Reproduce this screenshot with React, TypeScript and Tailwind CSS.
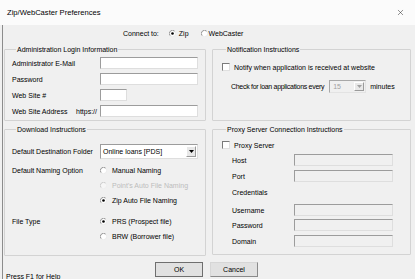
import { X } from 'lucide-react';

// ── Small classic controls ──────────────────────────────────
function Radio({ checked = false }: { checked?: boolean }) {
  return (
    <svg width="7" height="7" viewBox="0 0 14 14" className="shrink-0">
      <circle cx="7" cy="7" r="6.3" fill="#ffffff" />
      <path d="M11.5 2.5 A6.3 6.3 0 0 0 2.5 11.5" stroke="#7a7a7a" strokeWidth="1.6" fill="none" />
      <path d="M2.5 11.5 A6.3 6.3 0 0 0 11.5 2.5" stroke="#e6e6e6" strokeWidth="1.6" fill="none" />
      {checked && <circle cx="7" cy="7" r="2.6" fill="#000000" />}
    </svg>
  );
}

function Check() {
  return <div className="w-[8px] h-[8px] shrink-0 bg-white border border-t-[#7a7a7a] border-l-[#7a7a7a] border-r-[#e0e0e0] border-b-[#e0e0e0]" />;
}

function Field({ w = 'w-[98px]', disabled = false }: { w?: string; disabled?: boolean }) {
  return (
    <input
      readOnly
      className={`${w} h-[12px] ${disabled ? 'bg-[#f0f0f0]' : 'bg-white'} border border-t-[#9c9c9c] border-l-[#9c9c9c] border-r-[#dedede] border-b-[#dedede] outline-none`}
    />
  );
}

function Arrow({ color = '#000' }: { color?: string }) {
  return (
    <div className="w-[10px] self-stretch m-[1px] bg-[#e8e8e8] border border-t-white border-l-white border-r-[#9a9a9a] border-b-[#9a9a9a] flex items-center justify-center">
      <svg width="5" height="3" viewBox="0 0 5 3">
        <path d="M0 0 H5 L2.5 3 Z" fill={color} />
      </svg>
    </div>
  );
}

function Group({ title, className, children }: { title: string; className: string; children: React.ReactNode }) {
  return (
    <fieldset className={`border border-[#d3d3d3] rounded-[1px] ${className}`}>
      <legend className="ml-[4px] px-[1px] leading-[9px]">{title}</legend>
      {children}
    </fieldset>
  );
}

// ── Dialog ──────────────────────────────────────────────────
export default function App() {
  return (
    <div className="w-[415px] h-[279px] overflow-hidden bg-[#f0f0f0] text-[7px] leading-[9px] text-black font-['Liberation_Sans',Arial,sans-serif] flex flex-col">
      {/* Title bar */}
      <div className="h-[25px] shrink-0 bg-[#fbfbfb] flex items-center justify-between pl-[7px] pr-[10px]">
        <span className="text-[7.6px]">Zip/WebCaster Preferences</span>
        <X size={9} strokeWidth={1.3} color="#222" />
      </div>

      <div className="flex-1 flex flex-col ml-[2px] pl-[1px] border-l border-[#8c8c8c]">
        {/* Connect to */}
        <div className="h-[16px] shrink-0 flex items-center pl-[119px]">
          <span>Connect to:</span>
          <span className="ml-[10px]"><Radio checked /></span>
          <span className="ml-[3px]">Zip</span>
          <span className="ml-[12px]"><Radio /></span>
          <span className="ml-[1px]">WebCaster</span>
        </div>

        {/* Row 1 */}
        <div className="flex gap-[6px] mt-[4px]">
          <Group title="Administration Login Information" className="w-[202px] h-[76px] pl-[7px] pt-[3px]">
            <div className="flex flex-col gap-[4px]">
              <div className="flex items-center h-[12px]">
                <span className="w-[88px]">Administrator E-Mail</span>
                <Field />
              </div>
              <div className="flex items-center h-[12px]">
                <span className="w-[88px]">Password</span>
                <Field />
              </div>
              <div className="flex items-center h-[12px]">
                <span className="w-[88px]">Web Site #</span>
                <Field w="w-[27px]" />
              </div>
              <div className="flex items-center h-[12px]">
                <span className="w-[88px] flex justify-between pr-[3px]">
                  <span>Web Site Address</span>
                  <span>https://</span>
                </span>
                <Field />
              </div>
            </div>
          </Group>

          <Group title="Notification Instructions" className="w-[199px] h-[76px] pl-[9px] pt-[8px]">
            <div className="flex items-center h-[10px] gap-[4px]">
              <Check />
              <span>Notify when application is received at website</span>
            </div>
            <div className="flex items-center h-[13px] mt-[8px] ml-[9px]">
              <span className="tracking-[-0.3px]">Check for loan applications every</span>
              <div className="ml-[5px] w-[37px] h-[13px] flex items-stretch bg-[#f0f0f0] border border-t-[#a8a8a8] border-l-[#a8a8a8] border-r-[#e3e3e3] border-b-[#e3e3e3]">
                <span className="flex-1 pl-[3px] flex items-center text-[#a0a0a0]">15</span>
                <Arrow color="#a0a0a0" />
              </div>
              <span className="ml-[4px]">minutes</span>
            </div>
          </Group>
        </div>

        {/* Row 2 */}
        <div className="flex gap-[6px] mt-[4px]">
          <Group title="Download Instructions" className="w-[202px] h-[131px] pl-[7px] pt-[10px]">
            <div className="flex items-center h-[15px]">
              <span className="w-[88px]">Default Destination Folder</span>
              <div className="w-[98px] h-[15px] flex items-stretch bg-white border border-t-[#9c9c9c] border-l-[#9c9c9c] border-r-[#dedede] border-b-[#dedede]">
                <span className="flex-1 pl-[2px] flex items-center">Online loans [PDS]</span>
                <Arrow />
              </div>
            </div>

            <div className="flex mt-[5px]">
              <span className="w-[88px] h-[12px] flex items-center">Default Naming Option</span>
              <div className="flex flex-col gap-[3px]">
                <div className="flex items-center h-[12px] gap-[5px]"><Radio /><span>Manual Naming</span></div>
                <div className="flex items-center h-[12px] gap-[5px] opacity-40"><Radio /><span className="text-[#6d6d6d]">Point's Auto File Naming</span></div>
                <div className="flex items-center h-[12px] gap-[5px]"><Radio checked /><span>Zip Auto File Naming</span></div>
              </div>
            </div>

            <div className="flex mt-[9px]">
              <span className="w-[88px] h-[12px] flex items-center">File Type</span>
              <div className="flex flex-col gap-[3px]">
                <div className="flex items-center h-[12px] gap-[5px]"><Radio checked /><span>PRS (Prospect file)</span></div>
                <div className="flex items-center h-[12px] gap-[5px]"><Radio /><span>BRW (Borrower file)</span></div>
              </div>
            </div>
          </Group>

          <Group title="Proxy Server Connection Instructions" className="w-[199px] h-[130px] pl-[9px] pt-[6px]">
            <div className="flex items-center h-[10px] gap-[4px]">
              <Check />
              <span>Proxy Server</span>
            </div>
            <div className="flex flex-col pl-[10px]">
              <div className="flex items-center h-[12px] mt-[4px]">
                <span className="w-[62px]">Host</span>
                <Field w="w-[99px]" disabled />
              </div>
              <div className="flex items-center h-[12px] mt-[4px]">
                <span className="w-[62px]">Port</span>
                <Field w="w-[99px]" disabled />
              </div>
              <div className="flex items-center h-[10px] mt-[5px]">Credentials</div>
              <div className="flex items-center h-[12px] mt-[7px]">
                <span className="w-[62px]">Username</span>
                <Field w="w-[99px]" disabled />
              </div>
              <div className="flex items-center h-[12px] mt-[3px]">
                <span className="w-[62px]">Password</span>
                <Field w="w-[99px]" disabled />
              </div>
              <div className="flex items-center h-[12px] mt-[4px]">
                <span className="w-[62px]">Domain</span>
                <Field w="w-[99px]" disabled />
              </div>
            </div>
          </Group>
        </div>

        {/* Buttons + status */}
        <div className="flex items-start">
          <span className="w-[151px] pl-[2px] mt-[16px]">Press F1 for Help</span>
          <button className="mt-[6px] w-[48px] h-[15px] bg-[#e1e1e1] border border-[#6f6f6f]">OK</button>
          <button className="mt-[6px] ml-[7px] w-[48px] h-[15px] bg-[#e1e1e1] border border-t-[#d6d6d6] border-l-[#d6d6d6] border-r-[#8a8a8a] border-b-[#8a8a8a]">Cancel</button>
        </div>
      </div>
    </div>
  );
}
